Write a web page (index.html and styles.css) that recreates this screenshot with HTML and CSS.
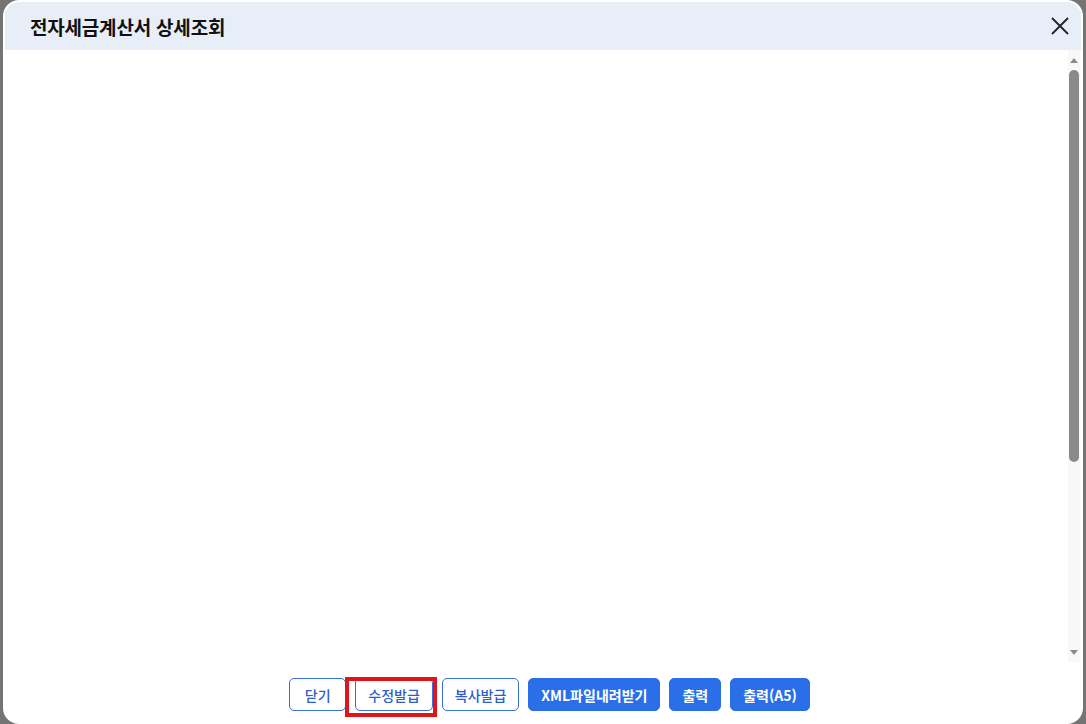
FILE: index.html
```html
<!DOCTYPE html>
<html lang="ko">
<head>
  <meta charset="utf-8">
  <title>전자세금계산서 상세조회</title>
  <link rel="stylesheet" href="styles.css">
</head>
<body>
  <div class="backdrop">
    <div class="dialog">
      <div class="dialog-header">
        <h1 class="dialog-title">전자세금계산서 상세조회</h1>
        <button class="close-btn" aria-label="닫기">
          <svg width="18" height="18" viewBox="0 0 18 18">
            <path d="M1 1 L17 17 M17 1 L1 17" stroke="#222" stroke-width="1.8" fill="none"/>
          </svg>
        </button>
      </div>

      <div class="dialog-body">
        <div class="body-content"></div>
        <div class="scrollbar">
          <div class="scroll-arrow up"></div>
          <div class="scroll-track">
            <div class="scroll-thumb"></div>
          </div>
          <div class="scroll-arrow down"></div>
        </div>
      </div>

      <div class="dialog-footer">
        <button class="btn btn-line btn-close">닫기</button>
        <button class="btn btn-line marked">수정발급</button>
        <button class="btn btn-line">복사발급</button>
        <button class="btn btn-fill">XML파일내려받기</button>
        <button class="btn btn-fill">출력</button>
        <button class="btn btn-fill">출력(A5)</button>
      </div>
    </div>
  </div>
</body>
</html>
```

FILE: styles.css
```css
html, body {
  margin: 0;
  height: 100%;
}

body {
  font-family: 'Noto Sans CJK KR', 'Noto Sans', sans-serif;
  background-color: #747474;
  overflow: hidden;
}

.backdrop {
  height: 724px;
  padding-left: 3px;
  box-sizing: border-box;
}

.dialog {
  height: 724px;
  width: 1080px;
  box-sizing: border-box;
  border: 2px dotted #ffffff;
  border-radius: 16px;
  background-color: #ffffff;
  display: flex;
  flex-direction: column;
  overflow: hidden;
}

.dialog-header {
  height: 48px;
  flex: none;
  background-color: #e8eef8;
  display: flex;
  align-items: center;
  justify-content: space-between;
  padding: 0 11px 0 25px;
}

.dialog-title {
  margin: 0;
  font-size: 19px;
  font-weight: bold;
  color: #111111;
  letter-spacing: -0.2px;
}

.close-btn {
  border: none;
  background: none;
  padding: 0;
  width: 20px;
  height: 20px;
  display: flex;
  align-items: center;
  justify-content: center;
  cursor: pointer;
}

.dialog-body {
  flex: 1;
  display: flex;
  min-height: 0;
}

.body-content {
  flex: 1;
}

.scrollbar {
  width: 12px;
  margin-right: 1px;
  display: flex;
  flex-direction: column;
  background-color: #f8f8f8;
  padding: 4px 0;
}

.scroll-arrow {
  height: 12px;
  flex: none;
  display: flex;
  justify-content: center;
  align-items: center;
}

.scroll-arrow.up::before {
  content: "";
  border-left: 4px solid transparent;
  border-right: 4px solid transparent;
  border-bottom: 5px solid #8a8a8a;
}

.scroll-arrow.down::before {
  content: "";
  border-left: 4px solid transparent;
  border-right: 4px solid transparent;
  border-top: 5px solid #8a8a8a;
}

.scroll-track {
  flex: 1;
  padding: 4px 1px;
}

.scroll-thumb {
  height: 392px;
  background-color: #8a8a8a;
  border-radius: 5px;
}

.dialog-footer {
  height: 60px;
  flex: none;
  display: flex;
  justify-content: center;
  align-items: flex-start;
  gap: 9px;
  padding-top: 16px;
  padding-left: 13px;
  box-sizing: border-box;
}

.btn {
  height: 33px;
  padding: 0 12px;
  font-family: inherit;
  font-size: 14px;
  border-radius: 5px;
  cursor: pointer;
}

.btn-close {
  min-width: 57px;
}

.btn-line {
  background-color: #ffffff;
  color: #2c5fc8;
  border: 1px solid #3a6fd8;
  font-weight: 500;
}

.btn-fill {
  background-color: #2b6fe8;
  color: #ffffff;
  border: 1px solid #2b6fe8;
  font-weight: bold;
}

.btn-fill:first-of-type {
  margin-left: 2px;
}

.marked {
  position: relative;
}

.marked::after {
  content: "";
  position: absolute;
  left: -11px;
  right: -5px;
  top: -2px;
  bottom: -7px;
  border: 4px solid #e0141b;
}
```
